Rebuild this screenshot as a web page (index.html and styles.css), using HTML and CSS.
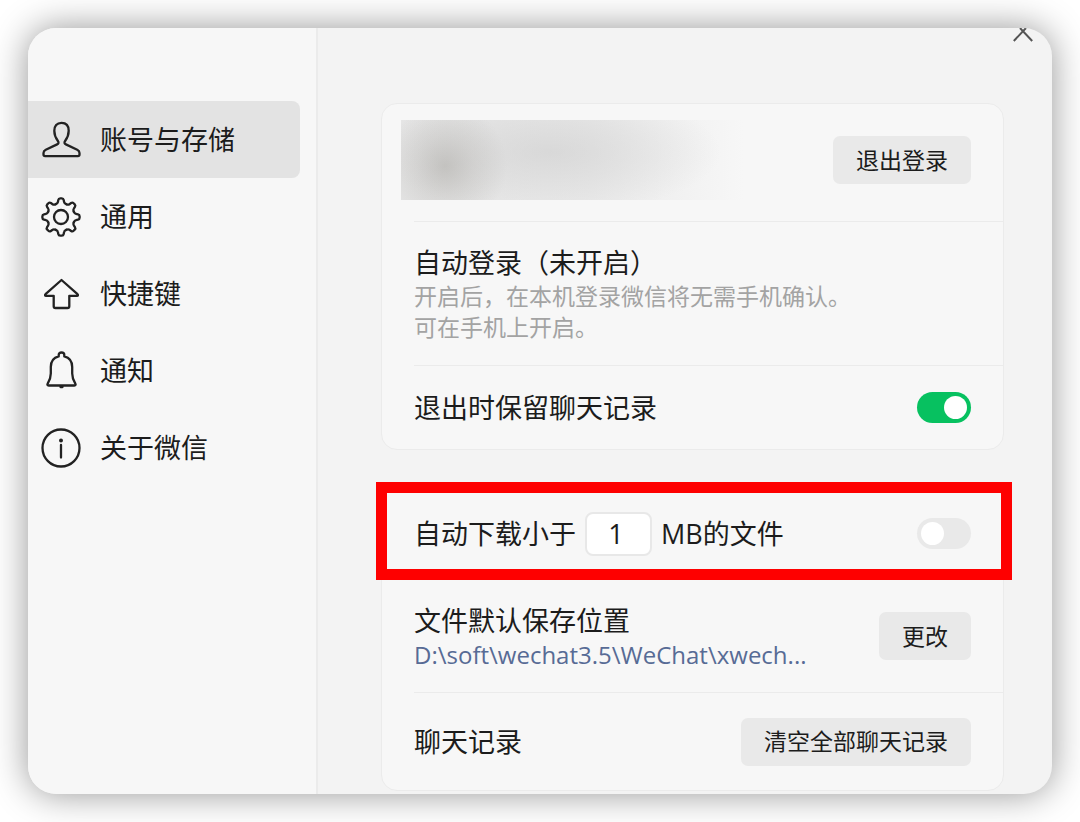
FILE: index.html
```
<!DOCTYPE html>
<html lang="zh-CN">
<head>
  <meta charset="UTF-8">
  <meta name="viewport" content="width=device-width, initial-scale=1.0">
  <title>设置</title>
  <link rel="stylesheet" href="styles.css">
</head>
<body>
  <div class="window">
    <button class="close" aria-label="关闭">
      <svg width="20" height="14" viewBox="0 0 20 14"><path d="M.8 13 13 0M19.2 13 7 0"/></svg>
    </button>

    <nav class="sidebar">
      <a href="#account" class="nav-item active">
        <svg class="icon" viewBox="0 0 40 40"><path d="M20.5 2.8c-4.7 0-7.2 3.2-7.2 7.9 0 4.4 1.6 7.6 3.6 10.3 1 1.4.8 2.600-.8 3.400L4.800 29.800c-1.700.8-2.300 1.700-2.300 3.300v1.400c0 1 .6 1.600 1.600 1.600h32.800c1 0 1.600-.6 1.600-1.600v-1.400c0-1.600-.6-2.500-2.300-3.300l-11.300-5.400c-1.600-.8-1.800-2-.8-3.400 2-2.700 3.600-5.900 3.600-10.300 0-4.700-2.500-7.900-7.200-7.900z"/></svg>
        <span>账号与存储</span>
      </a>
      <a href="#general" class="nav-item">
        <svg class="icon" viewBox="-20 -20 40 40">
          <defs><path id="tooth" d="M-5.300-12.800C-3.900-13.300-3.300-13.800-3.100-15L-2.700-17Q-2.400-18.600-.8-18.600H.8Q2.400-18.600 2.700-17L3.100-15C3.300-13.800 3.900-13.300 5.300-12.800"/></defs>
          <use href="#tooth"/>
          <use href="#tooth" transform="rotate(45)"/>
          <use href="#tooth" transform="rotate(90)"/>
          <use href="#tooth" transform="rotate(135)"/>
          <use href="#tooth" transform="rotate(180)"/>
          <use href="#tooth" transform="rotate(225)"/>
          <use href="#tooth" transform="rotate(270)"/>
          <use href="#tooth" transform="rotate(315)"/>
          <circle r="7"/>
        </svg>
        <span>通用</span>
      </a>
      <a href="#shortcuts" class="nav-item">
        <svg class="icon" viewBox="0 0 40 40"><path d="M20.500 6 4.500 20.200c-.8.8-.5 1.600.5 1.600h7.700v10.400c0 1.200.6 1.800 1.800 1.800h12c1.200 0 1.800-.6 1.800-1.800V21.800H36c1 0 1.300-.8.5-1.600z"/></svg>
        <span>快捷键</span>
      </a>
      <a href="#notice" class="nav-item">
        <svg class="icon" viewBox="0 0 40 40"><path d="M17.700 5.400V4c0-1.600 1-2.500 2.800-2.500s2.800.9 2.800 2.500v1.400c5.200 1.300 7.900 5.300 7.900 10.600v6.500c0 4.500 1.400 7.200 3 9.800.8 1.400.5 2.200-.9 2.200H7.700c-1.400 0-1.700-.8-.9-2.200 1.600-2.600 3-5.300 3-9.800V16c0-5.300 2.700-9.300 7.900-10.600zM19.500 36h2"/></svg>
        <span>通知</span>
      </a>
      <a href="#about" class="nav-item">
        <svg class="icon" viewBox="0 0 40 40"><circle cx="20" cy="20" r="18.500"/><path d="M20 17v12.500"/><circle class="dot" cx="20" cy="12.500" r="2"/></svg>
        <span>关于微信</span>
      </a>
    </nav>

    <main class="content">
      <section class="card">
        <div class="row profile">
          <div class="blurred"></div>
          <button class="btn">退出登录</button>
        </div>
        <div class="row auto-login">
          <div>
            <h2>自动登录（未开启）</h2>
            <p>开启后，在本机登录微信将无需手机确认。<br>可在手机上开启。</p>
          </div>
        </div>
        <div class="row keep">
          <label for="keepHistory">退出时保留聊天记录</label>
          <input type="checkbox" class="switch" id="keepHistory" checked>
        </div>
      </section>

      <section class="card">
        <div class="row download">
          <div class="size-field">
            <label for="maxSize">自动下载小于</label>
            <input type="text" id="maxSize" value="1">
            <label for="autoDownload">MB的文件</label>
          </div>
          <input type="checkbox" class="switch" id="autoDownload">
        </div>
        <div class="row location">
          <div>
            <h2>文件默认保存位置</h2>
            <a href="#folder" class="path">D:\soft\wechat3.5\WeChat\xwech...</a>
          </div>
          <button class="btn">更改</button>
        </div>
        <div class="row history">
          <h2>聊天记录</h2>
          <button class="btn">清空全部聊天记录</button>
        </div>
      </section>
    </main>
  </div>
</body>
</html>
```
FILE: styles.css
```
* {
  box-sizing: border-box;
}
body {
  margin: 0;
  padding: 28px;
  background: #fff;
  color: #1c1c1c;
  font-family: "Open Sans", "Noto Sans CJK SC", sans-serif;
  font-size: 27px;
  line-height: 36px;
}
h2, p {
  margin: 0;
  font-size: inherit;
  font-weight: normal;
}
button, input {
  font-family: inherit;
  color: inherit;
}
.window {
  position: relative;
  display: flex;
  border-radius: 28px;
  background: #f3f3f3;
  box-shadow: 0 0 36px rgba(0, 0, 0, 0.42);
  overflow: hidden;
}
.close {
  position: absolute;
  top: 0;
  right: 19px;
  padding: 0;
  border: none;
  background: none;
  line-height: 0;
  cursor: pointer;
}
.close svg {
  fill: none;
  stroke: #555;
  stroke-width: 2;
}

/* sidebar */
.sidebar {
  flex: none;
  width: 290px;
  padding: 73px 16px 0 0;
  background: #f7f7f7;
  border-right: 2px solid #ebebeb;
}
.nav-item {
  display: flex;
  align-items: center;
  gap: 19px;
  height: 77px;
  padding-left: 13px;
  border-radius: 0 8px 8px 0;
  color: inherit;
  text-decoration: none;
}
.nav-item.active {
  background: #e3e3e3;
}
.icon {
  width: 40px;
  height: 40px;
  fill: none;
  stroke: #222;
  stroke-width: 2.3;
  stroke-linejoin: round;
  stroke-linecap: round;
}
.icon .dot {
  fill: #222;
  stroke: none;
}

/* settings */
.content {
  flex: 1;
  display: flex;
  flex-direction: column;
  gap: 36px;
  padding: 75px 48px 3px 63px;
}
.card {
  background: #f7f7f7;
  border: 1px solid #ebebeb;
  border-radius: 16px;
}
.row {
  display: flex;
  align-items: center;
  justify-content: space-between;
  margin-left: 32px;
  padding-right: 32px;
  border-bottom: 1px solid #ebebeb;
}
.row:last-child {
  border-bottom: none;
}
.row p {
  color: #a3a3a3;
  font-size: 23px;
  line-height: 31px;
}
.profile {
  height: 118px;
  padding-bottom: 5px;
}
.auto-login {
  height: 144px;
}
.keep {
  height: 83px;
}
.blurred {
  width: 350px;
  height: 80px;
  margin-left: -13px;
  background:
    radial-gradient(ellipse 62px 64px at 44px 46px, rgba(165, 163, 158, 0.5), rgba(175, 173, 169, 0.3) 45%, rgba(190, 188, 184, 0)),
    radial-gradient(ellipse 170px 62px at 150px 32px, rgba(200, 200, 200, 0.5), rgba(210, 210, 210, 0.4) 45%, rgba(225, 225, 225, 0)),
    linear-gradient(to right, #e6e6e6, #eaeaea 55%, #f7f7f7 98%);
}
.btn {
  height: 48px;
  padding: 0 23px;
  border: none;
  border-radius: 7px;
  background: #e9e9e9;
  font-size: 23px;
  line-height: 31px;
  cursor: pointer;
}
.btn:hover {
  background: #dedede;
}
.switch {
  appearance: none;
  flex: none;
  width: 54px;
  height: 31px;
  margin: 0;
  padding: 4px;
  border-radius: 16px;
  background: #e9e9e9;
  cursor: pointer;
}
.switch::before {
  content: "";
  display: block;
  width: 23px;
  height: 23px;
  border-radius: 50%;
  background: #fff;
}
.switch:checked {
  background: #07c160;
}
.switch:checked::before {
  margin-left: auto;
}
.download {
  position: relative;
  height: 93px;
  border-bottom: none;
}
/* red frame around the download setting */
.download::after {
  content: "";
  position: absolute;
  top: -5px;
  right: -9px;
  bottom: 0;
  left: -38px;
  border: 11px solid #fe0000;
  pointer-events: none;
}
.size-field {
  display: flex;
  align-items: center;
  gap: 9px;
}
.size-field input {
  width: 67px;
  height: 44px;
  padding: 0 5px 0 0;
  border: 2px solid #e8e8e8;
  border-radius: 8px;
  background: #fff;
  font-size: 27px;
  text-align: center;
}
.location {
  height: 113px;
}
.path {
  display: block;
  color: #576b95;
  font-size: 24px;
  line-height: 31px;
  text-decoration: none;
}
.history {
  height: 97px;
}
```
